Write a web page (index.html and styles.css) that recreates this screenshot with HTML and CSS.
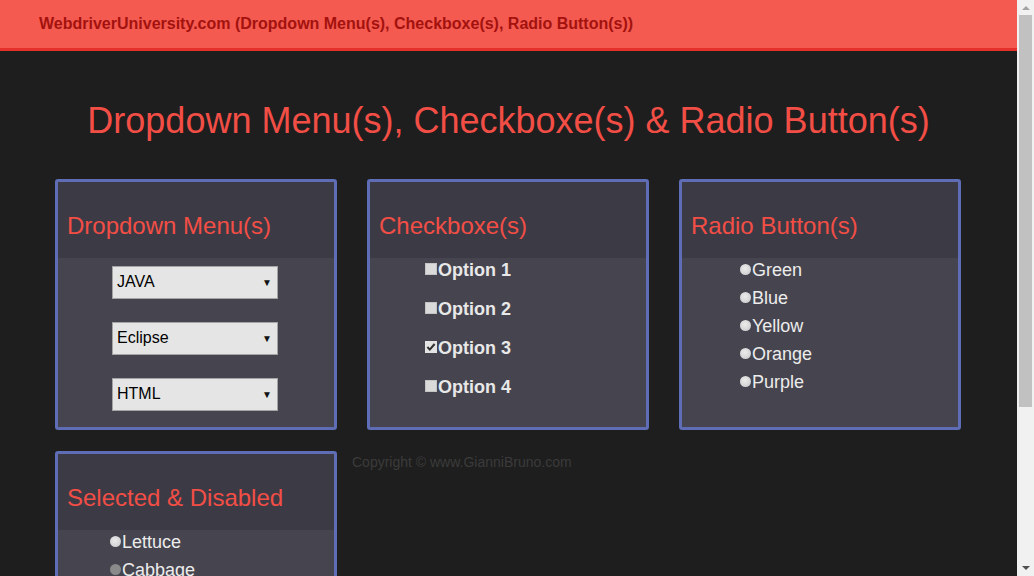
FILE: index.html
```html
<!DOCTYPE html>
<html lang="en">
<head>
<meta charset="utf-8">
<title>WebdriverUniversity.com (Dropdown Menu(s), Checkboxe(s), Radio Button(s))</title>
<link rel="stylesheet" href="styles.css">
</head>
<body>
<nav class="navbar">
  <a class="brand" href="#">WebdriverUniversity.com (Dropdown Menu(s), Checkboxe(s), Radio Button(s))</a>
</nav>

<h1 class="page-title">Dropdown Menu(s), Checkboxe(s) &amp; Radio Button(s)</h1>

<main class="content">
  <div class="grid">
    <section class="card">
      <h2 class="card-head">Dropdown Menu(s)</h2>
      <div class="card-body dropdowns">
        <div class="select"><span>JAVA</span><span class="caret">&#9660;</span></div>
        <div class="select"><span>Eclipse</span><span class="caret">&#9660;</span></div>
        <div class="select"><span>HTML</span><span class="caret">&#9660;</span></div>
      </div>
    </section>

    <section class="card">
      <h2 class="card-head">Checkboxe(s)</h2>
      <div class="card-body checks">
        <label class="check"><span class="box"></span>Option 1</label>
        <label class="check"><span class="box"></span>Option 2</label>
        <label class="check"><span class="box checked"><svg viewBox="0 0 12 12" width="12" height="12"><path d="M2.4 6 L4.8 8.6 L9.6 3" fill="none" stroke="#2e2e2e" stroke-width="2"/></svg></span>Option 3</label>
        <label class="check"><span class="box"></span>Option 4</label>
      </div>
    </section>

    <section class="card">
      <h2 class="card-head">Radio Button(s)</h2>
      <div class="card-body radios">
        <label class="radio"><span class="dot"></span>Green</label>
        <label class="radio"><span class="dot"></span>Blue</label>
        <label class="radio"><span class="dot"></span>Yellow</label>
        <label class="radio"><span class="dot"></span>Orange</label>
        <label class="radio"><span class="dot"></span>Purple</label>
      </div>
    </section>
  </div>

  <div class="row2">
    <section class="card">
      <h2 class="card-head">Selected &amp; Disabled</h2>
      <div class="card-body radios selected">
        <label class="radio"><span class="dot"></span>Lettuce</label>
        <label class="radio"><span class="dot disabled"></span>Cabbage</label>
        <label class="radio"><span class="dot"></span>Pumpkin</label>
        <div class="select fruit"><span>Grape</span><span class="caret">&#9660;</span></div>
      </div>
    </section>
    <p class="copyright">Copyright &copy; www.GianniBruno.com</p>
  </div>
</main>

<div class="scrollbar" aria-hidden="true">
  <span class="sb-arrow up"></span>
  <span class="sb-thumb"></span>
  <span class="sb-arrow down"></span>
</div>
</body>
</html>
```

FILE: styles.css
```css
html, body {
  margin: 0;
  padding: 0;
}

body {
  background: #1e1e1e;
  font-family: "Liberation Sans", Arial, sans-serif;
  color: #eaeaea;
  min-height: 800px;
  margin-right: 17px;
}

/* simulated classic scrollbar on the right edge */
.scrollbar {
  position: fixed;
  top: 0;
  right: 0;
  width: 17px;
  height: 100vh;
  background: #f1f1f1;
  display: flex;
  flex-direction: column;
  align-items: center;
}

.sb-arrow {
  width: 0;
  height: 0;
  border-left: 4px solid transparent;
  border-right: 4px solid transparent;
}

.sb-arrow.up {
  margin-top: 6px;
  border-bottom: 4px solid #a3a3a3;
}

.sb-arrow.down {
  margin-top: auto;
  margin-bottom: 6px;
  border-top: 4px solid #505050;
}

.sb-thumb {
  width: 13px;
  height: 392px;
  margin-top: 5px;
  background: #c1c1c1;
}

.navbar {
  height: 48px;
  background: #f55a50;
  border-bottom: 3px solid #e6302a;
  display: flex;
  align-items: center;
  padding-left: 39px;
}

.brand {
  color: #a3120e;
  font-weight: bold;
  font-size: 16px;
  text-decoration: none;
  margin-top: -1px;
}

.page-title {
  margin: 50px 0 38px;
  text-align: center;
  font-weight: normal;
  font-size: 36px;
  line-height: 1.1;
  color: #f24e46;
}

.content {
  padding-left: 55px;
}

.grid {
  display: grid;
  grid-template-columns: repeat(3, 282px);
  column-gap: 30px;
}

.card {
  width: 282px;
  box-sizing: border-box;
  border: 3px solid #5e6db5;
  border-radius: 3px;
  background: #46454f;
  display: flex;
  flex-direction: column;
}

.card-head {
  margin: 0;
  height: 76px;
  box-sizing: border-box;
  padding: 31px 0 0 9px;
  background: #3c3b45;
  color: #f24e46;
  font-weight: normal;
  font-size: 24px;
  line-height: 1.1;
}

.card-body {
  flex: 1;
}

.dropdowns {
  display: flex;
  flex-direction: column;
  gap: 23px;
  padding: 8px 0 16px 54px;
}

.select {
  width: 166px;
  height: 33px;
  box-sizing: border-box;
  border: 1px solid #a4a4a4;
  background: #e5e5e5;
  color: #000;
  font-size: 16px;
  display: flex;
  align-items: center;
  justify-content: space-between;
  padding: 0 5px 0 4px;
}

.caret {
  font-size: 10px;
  color: #111;
}

.checks {
  display: flex;
  flex-direction: column;
  gap: 19px;
  padding: 3px 0 0 55px;
}

.check {
  display: flex;
  align-items: center;
  height: 20px;
  font-weight: bold;
  font-size: 18px;
  color: #e8e8e8;
}

.box {
  width: 12px;
  height: 12px;
  box-sizing: border-box;
  background: #dadada;
  border: 1px solid #c4c4c4;
  margin: -3px 1px 0 0;
  display: flex;
}

.box.checked {
  background: #e4e4e4;
  border: none;
}

.radios {
  display: flex;
  flex-direction: column;
  gap: 8px;
  padding: 3px 0 0 58px;
}

.selected {
  padding-left: 52px;
}

.radio {
  display: flex;
  align-items: center;
  height: 20px;
  font-size: 18px;
  color: #ececec;
}

.dot {
  width: 11px;
  height: 11px;
  border-radius: 50%;
  background: radial-gradient(circle at 45% 40%, #ececec 0%, #d6d6d6 60%, #bcbcbc 100%);
  margin: -3px 1px 0 0;
}

.dot.disabled {
  background: #8a8a8a;
}

.fruit {
  margin: 14px 0 20px;
}

.row2 {
  display: flex;
  align-items: flex-start;
  gap: 15px;
  margin-top: 21px;
}

.copyright {
  margin: 1px 0 0;
  font-size: 14px;
  line-height: 20px;
  color: #3b3b3b;
}
```
